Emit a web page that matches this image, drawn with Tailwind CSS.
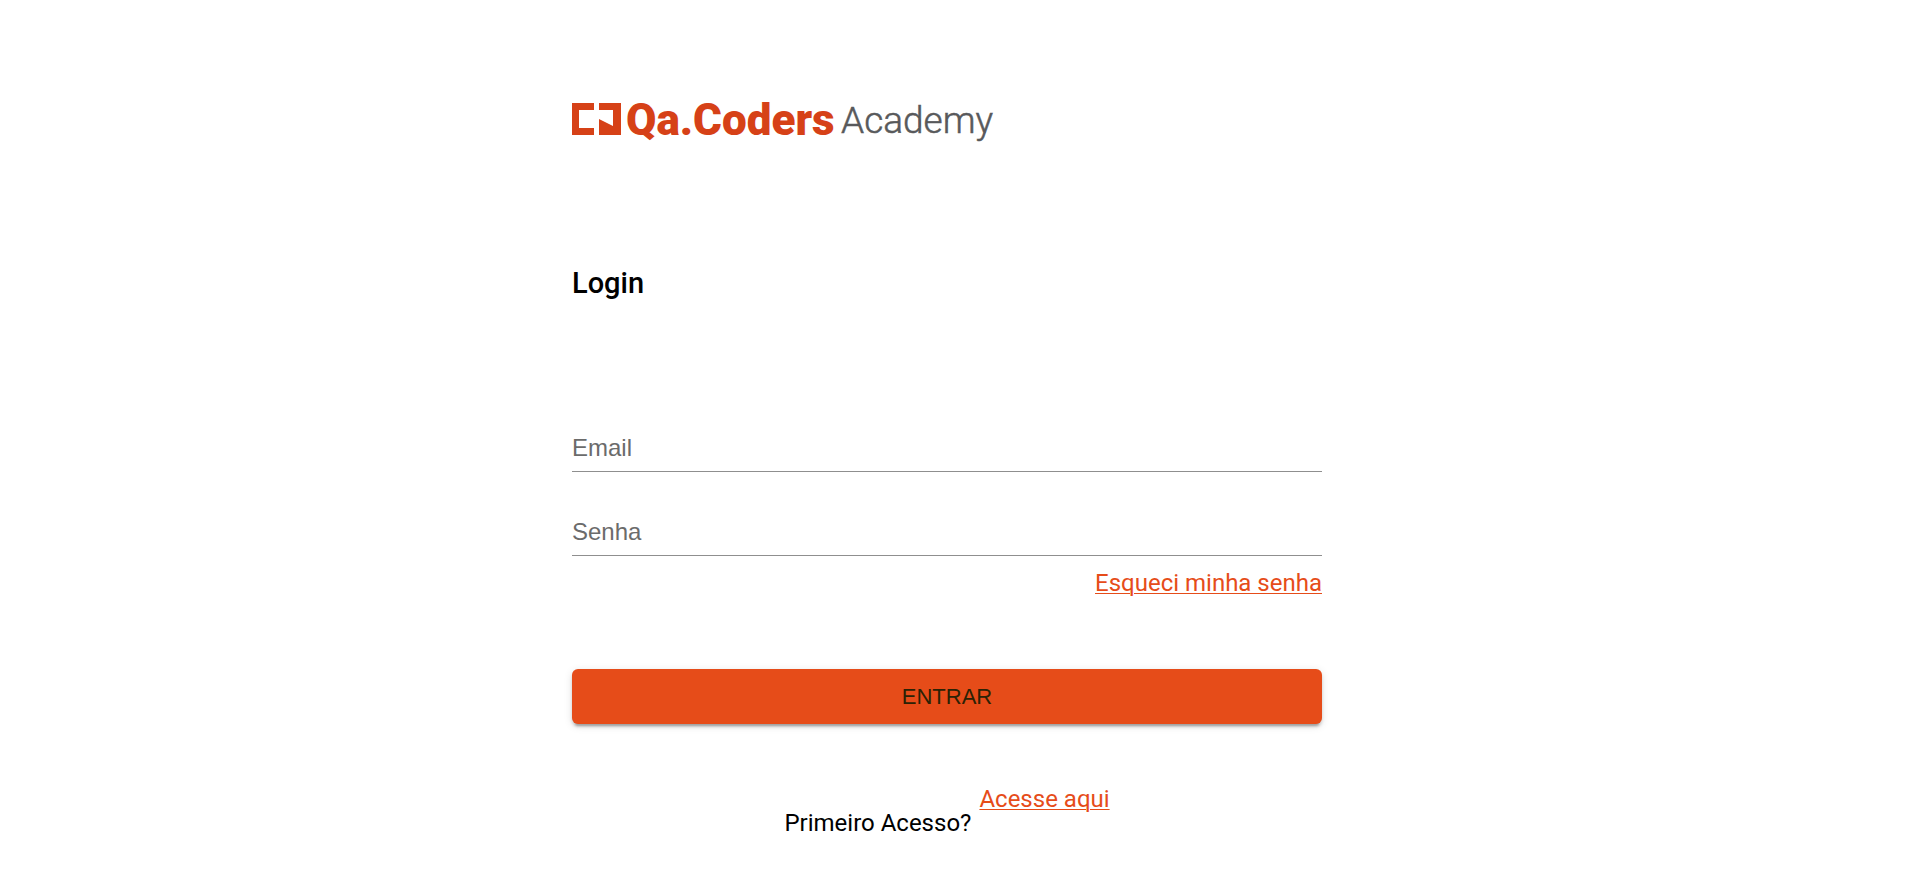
<!DOCTYPE html>
<html lang="pt-BR">
<head>
<meta charset="utf-8">
<meta name="viewport" content="width=device-width, initial-scale=1">
<title>Login</title>
<script src="https://cdn.jsdelivr.net/npm/@tailwindcss/browser@4"></script>
</head>
<body class="bg-white font-['Roboto',sans-serif] text-2xl text-black">
<main class="pl-4 pr-[42px] pt-[103px] pb-12">
  <div class="mx-auto flex w-full max-w-[750px] flex-col">
    <svg class="h-10 w-[424px] overflow-visible" viewBox="0 0 424 40" role="img" aria-label="Qa.Coders Academy">
      <path fill="#d64117" d="M0 0H22V7H7V25H22V32H0ZM27 0H49V32H27V16L41 23V7H27Z"/>
      <text x="54" y="32" fill="#d64117" font-size="44" font-weight="900">Qa.Coders</text>
      <text x="269" y="30" fill="#58595b" stroke="#58595b" stroke-width="0.5" font-size="37" font-weight="300">Academy</text>
    </svg>
    <h1 class="mt-[120px] text-[29px] leading-10 font-medium">Login</h1>
    <form class="mt-[120px] flex flex-col">
      <input id="email" type="email" placeholder="Email" aria-label="Email" class="h-[49px] w-full border-b border-[#8f8f8f] pt-0.5 font-['Liberation_Sans',sans-serif] outline-none placeholder:text-[#6b6b6b]">
      <input id="senha" type="password" placeholder="Senha" aria-label="Senha" class="mt-[35px] h-[49px] w-full border-b border-[#8f8f8f] pt-0.5 font-['Liberation_Sans',sans-serif] outline-none placeholder:text-[#6b6b6b]">
      <a href="#" class="mt-[9px] self-end leading-9 text-[#e64c19] underline decoration-1 underline-offset-2">Esqueci minha senha</a>
      <button type="submit" class="mt-[68px] h-[55px] w-full rounded-md bg-[#e64c19] font-['Liberation_Sans',sans-serif] text-[22px] text-[#2b2205] shadow-[0_5px_2px_-3px_rgba(0,0,0,0.2),0_3px_3px_0_rgba(0,0,0,0.14),0_2px_8px_0_rgba(0,0,0,0.12)]">ENTRAR</button>
    </form>
    <div class="mt-[57px] flex justify-center gap-2 leading-9">
      <p class="mt-6">Primeiro Acesso?</p>
      <a href="#" class="self-start text-[#e64c19] underline decoration-1 underline-offset-2">Acesse aqui</a>
    </div>
  </div>
</main>
</body>
</html>
